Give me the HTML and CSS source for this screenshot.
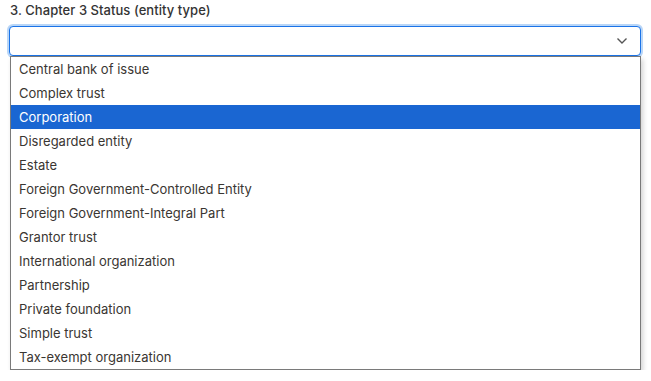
FILE: index.html
```html
<!DOCTYPE html>
<html>
<head>
<meta charset="utf-8">
<link rel="stylesheet" href="styles.css">
</head>
<body>
<div class="field">
  <label class="label">3. Chapter 3 Status (entity type)</label>
  <div class="select">
    <svg class="chev" width="12" height="8" viewBox="0 0 12 8"><path d="M1.5 1.5 L6 6 L10.5 1.5" fill="none" stroke="#555" stroke-width="1.4"/></svg>
  </div>
  <ul class="list">
    <li>Central bank of issue</li>
    <li>Complex trust</li>
    <li class="active">Corporation</li>
    <li>Disregarded entity</li>
    <li>Estate</li>
    <li>Foreign Government-Controlled Entity</li>
    <li>Foreign Government-Integral Part</li>
    <li>Grantor trust</li>
    <li>International organization</li>
    <li>Partnership</li>
    <li>Private foundation</li>
    <li>Simple trust</li>
    <li>Tax-exempt organization</li>
  </ul>
</div>
</body>
</html>
```
FILE: styles.css
```css
html, body { margin: 0; padding: 0; background: #fff; }
body { font-family: Inter, "Noto Sans", sans-serif; }
.field { padding: 2px 10px 0 10px; display: flex; flex-direction: column; }
.label { font-size: 13px; font-weight: 500; color: #333; line-height: 17px; letter-spacing: 0.05px; margin-bottom: 7px; }
.select {
  height: 28px;
  margin-left: -1px;
  border: 1px solid #1a73e8;
  border-radius: 4px;
  box-shadow: 0 0 0 2px #b9d6f7;
  display: flex; align-items: center; justify-content: flex-end;
  padding-right: 12px;
  background: #fff;
}
.chev { display: block; }
.list {
  list-style: none; margin: 0; padding: 0;
  border: 1px solid #7a7a7a;
  box-shadow: 2px 3px 5px rgba(0,0,0,0.18);
  background: #fff;
}
.list li {
  height: 24px; line-height: 24px;
  padding-left: 8px;
  font-size: 13px; color: #3a3632;
}
.list li.active { background: #1a66d2; color: #fff; }
```
